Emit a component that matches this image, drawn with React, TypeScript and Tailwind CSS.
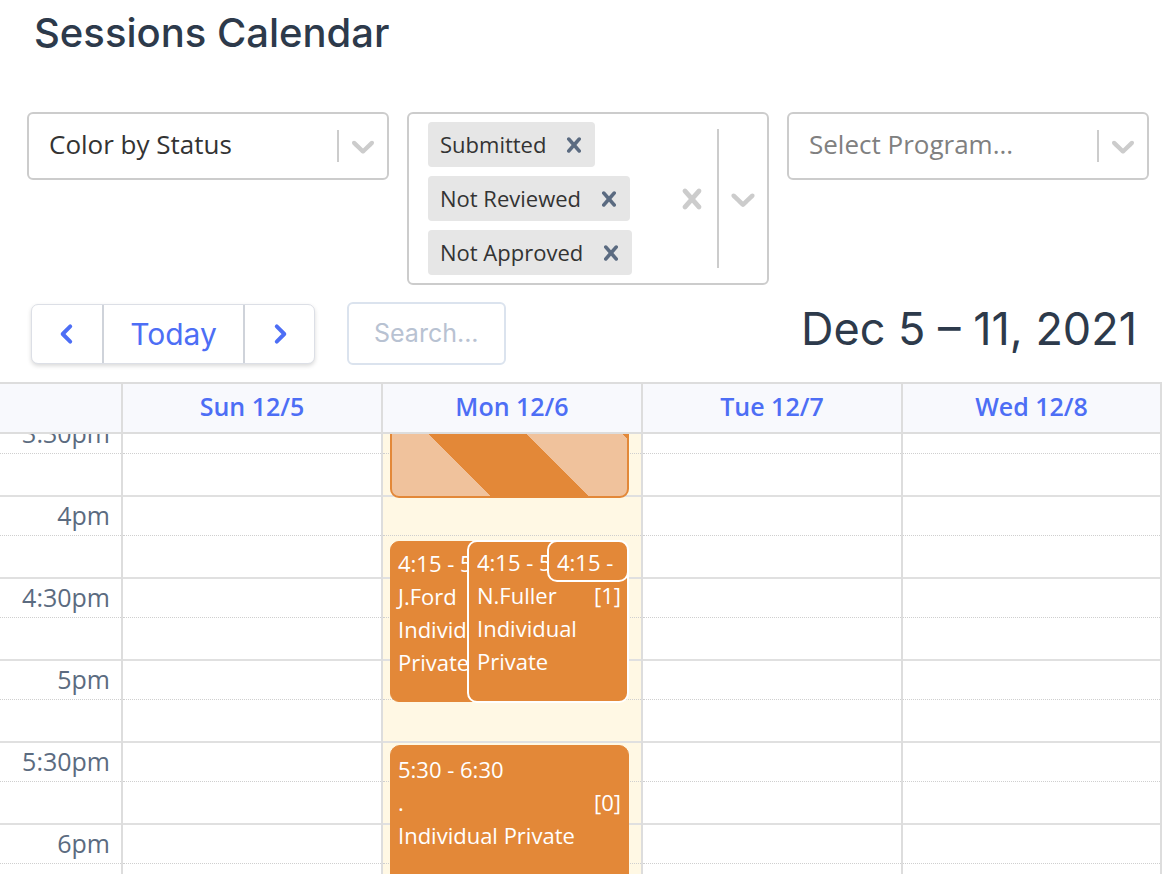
import React from "react";

const Chevron = ({ className = "" }: { className?: string }) => (
  <svg viewBox="0 0 20 20" className={className} fill="currentColor">
    <path d="M4.516 7.548c0.436-0.446 1.043-0.481 1.576 0l3.908 3.747 3.908-3.747c0.533-0.481 1.141-0.446 1.574 0 0.436 0.445 0.408 1.197 0 1.615-0.406 0.418-4.695 4.502-4.695 4.502-0.217 0.223-0.502 0.335-0.787 0.335s-0.57-0.112-0.789-0.335c0 0-4.287-4.084-4.695-4.502s-0.436-1.170 0-1.615z" />
  </svg>
);

const Cross = ({ className = "" }: { className?: string }) => (
  <svg viewBox="0 0 20 20" className={className} fill="currentColor">
    <path d="M14.348 14.849c-0.469 0.469-1.229 0.469-1.697 0l-2.651-3.030-2.651 3.029c-0.469 0.469-1.229 0.469-1.697 0-0.469-0.469-0.469-1.229 0-1.697l2.758-3.150-2.759-3.152c-0.469-0.469-0.469-1.228 0-1.697s1.228-0.469 1.697 0l2.652 3.031 2.651-3.031c0.469-0.469 1.228-0.469 1.697 0s0.469 1.229 0 1.697l-2.758 3.152 2.758 3.150c0.469 0.469 0.469 1.229 0 1.698z" />
  </svg>
);

const Chip = ({ label }: { label: string }) => (
  <div className="flex h-[45px] items-center rounded-[4px] bg-[#e6e6e6] pl-[12px] pr-[6px] text-[22px] text-[#333]">
    <span>{label}</span>
    <Cross className="ml-[13px] h-[30px] w-[30px] text-[#5b6b81]" />
  </div>
);

const days = ["Sun 12/5", "Mon 12/6", "Tue 12/7", "Wed 12/8"];
const labels = ["3:30pm", "4pm", "4:30pm", "5pm", "5:30pm", "6pm"];

const Slots = ({ gutter = false }: { gutter?: boolean }) => (
  <div className="-mt-[21px]">
    {labels.map((l) => (
      <div key={l} className="h-[82px] border-t-2 border-[#e0e0e0]">
        <div className="flex h-[39px] items-center justify-end border-b border-dotted border-[#cfcfcf] pr-[11px]">
          {gutter && <span className="text-[25px] text-[#5b6b80]">{l}</span>}
        </div>
      </div>
    ))}
  </div>
);

export default function App() {
  return (
    <div
      className="relative h-[874px] w-[1162px] overflow-hidden bg-white"
      style={{ fontFamily: '"Open Sans", "Noto Sans", sans-serif' }}
    >
      <h1
        className="pl-[34px] pt-[8px] text-[40px] font-medium leading-[50px] text-[#2d3a4b]"
        style={{ fontFamily: 'Inter, "Open Sans", sans-serif' }}
      >
        Sessions Calendar
      </h1>

      {/* Filters */}
      <div className="mt-[54px] flex items-start gap-[18px] pl-[27px]">
        <div className="flex h-[68px] w-[362px] items-center rounded-[6px] border-2 border-[#cccccc] bg-white">
          <span className="flex-1 pb-[4px] pl-[20px] text-[26px] text-[#333]">Color by Status</span>
          <div className="h-[32px] w-[2px] bg-[#cccccc]" />
          <Chevron className="mx-[5px] h-[38px] w-[38px] text-[#cccccc]" />
        </div>
        <div className="flex h-[173px] w-[362px] items-stretch rounded-[6px] border-2 border-[#cccccc] bg-white">
          <div className="flex flex-1 flex-col items-start gap-[9px] py-[8px] pl-[19px]">
            <Chip label="Submitted" />
            <Chip label="Not Reviewed" />
            <Chip label="Not Approved" />
          </div>
          <div className="flex items-center">
            <Cross className="mr-[5px] h-[40px] w-[40px] text-[#cccccc]" />
          </div>
          <div className="my-[15px] w-[2px] bg-[#cccccc]" />
          <div className="flex items-center">
            <Chevron className="mx-[4px] h-[40px] w-[40px] text-[#cccccc]" />
          </div>
        </div>
        <div className="flex h-[68px] w-[362px] items-center rounded-[6px] border-2 border-[#cccccc] bg-white">
          <span className="flex-1 pb-[4px] pl-[20px] text-[26px] text-[#808080]">Select Program...</span>
          <div className="h-[32px] w-[2px] bg-[#cccccc]" />
          <Chevron className="mx-[5px] h-[38px] w-[38px] text-[#cccccc]" />
        </div>
      </div>

      {/* Toolbar */}
      <div className="mt-[17px] flex h-[63px] items-center pl-[31px] pr-[25px]">
        <div className="flex h-[60px] overflow-hidden rounded-[7px] border border-[#dcdfe6] bg-white shadow-[0_2px_4px_rgba(0,0,0,0.15)]">
          <div className="flex w-[72px] items-center justify-center border-r-2 border-[#cfd3da]">
            <svg viewBox="0 0 24 24" className="h-[26px] w-[26px] text-[#4d6ef5]" fill="none" stroke="currentColor" strokeWidth="3.6" strokeLinecap="round" strokeLinejoin="round">
              <path d="M15 5l-7 7 7 7" />
            </svg>
          </div>
          <div
            className="flex w-[141px] items-center justify-center border-r-2 border-[#cfd3da] pt-[2px] text-[30px] text-[#4d6ef5]"
            style={{ fontFamily: 'Inter, "Open Sans", sans-serif' }}
          >
            Today
          </div>
          <div className="flex w-[69px] items-center justify-center">
            <svg viewBox="0 0 24 24" className="h-[26px] w-[26px] text-[#4d6ef5]" fill="none" stroke="currentColor" strokeWidth="3.6" strokeLinecap="round" strokeLinejoin="round">
              <path d="M9 5l7 7-7 7" />
            </svg>
          </div>
        </div>
        <div
          className="ml-[32px] flex h-[63px] w-[159px] items-center rounded-[6px] border-2 border-[#dbe3ee] pl-[25px] text-[25px] text-[#b8c2d2]"
          style={{ fontFamily: 'Inter, "Open Sans", sans-serif' }}
        >
          Search...
        </div>
        <div
          className="ml-auto pb-[10px] text-[45px] leading-none text-[#2d3a4b]"
          style={{ fontFamily: 'Inter, "Open Sans", sans-serif' }}
        >
          Dec 5 – 11, 2021
        </div>
      </div>

      {/* Calendar */}
      <div className="mt-[17px]">
        <div className="grid grid-cols-[121px_260px_260px_260px_261px] border-y-2 border-[#dddddd] bg-[#f8f9fd]">
          <div className="h-[48px]" />
          {days.map((d, i) => (
            <div
              key={d}
              className={`flex h-[48px] items-center justify-center border-l-2 border-[#dddddd] pb-[3px] text-[25px] font-semibold text-[#4d6ef5] ${i === 3 ? "border-r-2" : ""}`}
            >
              {d}
            </div>
          ))}
        </div>
        <div className="grid h-[441px] grid-cols-[121px_260px_260px_260px_261px] overflow-hidden">
          <div>
            <Slots gutter />
          </div>
          <div className="border-l-2 border-[#dddddd]">
            <Slots />
          </div>
          <div className="relative border-l-2 border-[#dddddd] bg-[#fff8e4]">
            <Slots />
            <div className="absolute inset-0 -top-[21px]">
              {/* striped event */}
              <div className="absolute -top-[120px] left-[7px] right-[12px] h-[205px] overflow-hidden rounded-[9px] border-2 border-[#e38838] bg-[repeating-linear-gradient(45deg,#f0c29c_2px,#f0c29c_70px,#e38838_70px,#e38838_139px)]" />
              {/* 4:15 events */}
              <div className="absolute left-[7px] top-[128px] h-[161px] w-[170px] overflow-hidden rounded-[9px] border border-[#e38838] bg-[#e38838] pl-[7px] pt-[5px] text-[22px] leading-[33px] text-white">
                <div className="whitespace-nowrap">4:15 - 5:15</div>
                <div>J.Ford</div>
                <div>Individual Private</div>
              </div>
              <div className="absolute left-[84px] right-[12px] top-[127px] h-[163px] rounded-[10px] border-2 border-white bg-[#e38838] pl-[8px] pr-[6px] pt-[4px] text-[22px] leading-[33px] text-white">
                <div className="overflow-hidden whitespace-nowrap">4:15 - 5:15</div>
                <div className="flex justify-between">
                  <span>N.Fuller</span>
                  <span>[1]</span>
                </div>
                <div>Individual Private</div>
              </div>
              <div className="absolute left-[164px] right-[12px] top-[127px] h-[42px] overflow-hidden rounded-[10px] border-2 border-white bg-[#e38838] pl-[8px] pt-[4px] text-[22px] leading-[33px] text-white">
                <div className="whitespace-nowrap">4:15 -</div>
              </div>
              {/* 5:30 event */}
              <div className="absolute left-[7px] right-[12px] top-[332px] h-[200px] rounded-[10px] border border-[#e38838] bg-[#e38838] pl-[7px] pr-[7px] pt-[7px] text-[22px] leading-[33px] text-white">
                <div>5:30 - 6:30</div>
                <div className="flex justify-between">
                  <span>.</span>
                  <span>[0]</span>
                </div>
                <div>Individual Private</div>
              </div>
            </div>
          </div>
          <div className="border-l-2 border-[#dddddd]">
            <Slots />
          </div>
          <div className="border-x-2 border-[#dddddd]">
            <Slots />
          </div>
        </div>
      </div>
    </div>
  );
}
